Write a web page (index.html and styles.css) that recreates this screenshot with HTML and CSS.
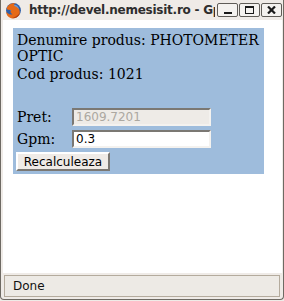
FILE: index.html
```html
<!DOCTYPE html>
<html lang="ro">
<head>
<meta charset="UTF-8">
<title>Gpm</title>
<link rel="stylesheet" href="styles.css">
</head>
<body>

<div class="window">
    <div class="titlebar">
        <svg class="logo" width="17" height="17" viewBox="0 0 16 16">
            <circle cx="8" cy="8" r="7" fill="#2f5fa8"/>
            <circle cx="9" cy="6.5" r="4" fill="#6c9ad6"/>
            <path d="M1.5 6.5 C2.5 2.5 6.5 0.5 10 1.5 C8.5 2 8 3 9 3.8 C11.5 4.8 14.5 7 13.8 10.5 C13 14 9.5 15.8 6 15.2 C2.8 14.6 1 12 1.2 9 C2.2 11 4.5 12.2 7 11.5 C5 10.5 4.5 8.5 6 7.5 C4.2 7.6 2.8 7.4 1.5 6.5 Z" fill="#e66a17"/>
            <path d="M13.8 10.5 C13 14 9.5 15.8 6 15.2 C9 14.5 11.5 13 13.8 10.5 Z" fill="#b8400c"/>
        </svg>
        <span class="title">http://devel.nemesisit.ro - Gpm</span>
        <div class="controls">
            <span class="ctl"><span class="ico-min"></span></span>
            <span class="ctl"><span class="ico-max"></span></span>
            <span class="ctl">
                <svg width="9" height="8" viewBox="0 0 9 8">
                    <path d="M1 0.5 L8 7.5 M8 0.5 L1 7.5" stroke="#1a1a1a" stroke-width="2.2"/>
                </svg>
            </span>
        </div>
    </div>

    <div class="content">
        <div class="panel">
            <p class="line">Denumire produs: PHOTOMETER OPTIC</p>
            <p class="line">Cod produs: 1021</p>
            <form class="calc">
                <div class="row">
                    <label>Pret:</label>
                    <input type="text" value="1609.7201" disabled>
                </div>
                <div class="row">
                    <label>Gpm:</label>
                    <input type="text" value="0.3">
                </div>
                <button type="button">Recalculeaza</button>
            </form>
        </div>
    </div>

    <div class="statusbar">Done</div>
</div>

</body>
</html>
```

FILE: styles.css
```css
body {
    margin: 0;
    padding: 0;
    background-color: #efebe7;
}

.window {
    width: 282px;
    height: 299px;
    border: 1px solid #6e6a63;
    border-top: none;
    border-radius: 0 0 4px 4px;
    background-color: #efebe7;
    display: flex;
    flex-direction: column;
}

.titlebar {
    height: 20px;
    display: flex;
    align-items: center;
    padding-left: 4px;
    overflow: hidden;
    white-space: nowrap;
    position: relative;
}

.logo {
    flex-shrink: 0;
    margin-right: 7px;
}

.title {
    font-family: "DejaVu Sans", sans-serif;
    font-weight: bold;
    font-size: 12px;
    letter-spacing: -0.25px;
    color: #2e2e2e;
}

.controls {
    position: absolute;
    right: 1px;
    top: 3px;
    display: flex;
    gap: 1px;
    background-color: #efebe7;
    padding-left: 2px;
}

.ctl {
    width: 19px;
    height: 12px;
    border: 1px solid #5f5c57;
    border-radius: 2px;
    background-color: #f4f2ef;
    display: flex;
    align-items: center;
    justify-content: center;
}

.ico-min {
    width: 8px;
    height: 2px;
    background-color: #1a1a1a;
    margin-top: 5px;
}

.ico-max {
    width: 7px;
    height: 5px;
    border: 1px solid #1a1a1a;
    border-top-width: 2px;
}

.content {
    flex: 1;
    background-color: #fff;
    margin: 0 1px 0 2px;
    padding: 8px 18px 0 10px;
}

.panel {
    background-color: #9ebcdc;
    padding: 4px 4px 3px 4px;
    font-family: "DejaVu Serif", serif;
    font-size: 14px;
    color: #000;
}

.line {
    margin: 0 0 2px 0;
    line-height: 16px;
}

.calc {
    margin-top: 26px;
}

.row {
    display: flex;
    align-items: center;
    height: 18px;
    margin-bottom: 4px;
}

.row label {
    width: 55px;
}

.row input {
    width: 131px;
    height: 14px;
    padding: 0 2px;
    border: 2px solid #7b7873;
    border-right-color: #f4f2ef;
    border-bottom-color: #f4f2ef;
    font-family: "DejaVu Sans", sans-serif;
    font-size: 12px;
    background-color: #fff;
    color: #000;
}

.row input:disabled {
    background-color: #eeebe7;
    color: #aca8a1;
}

button {
    display: block;
    margin-left: -1px;
    width: 94px;
    height: 19px;
    padding: 0;
    font-family: "DejaVu Sans", sans-serif;
    font-size: 12px;
    color: #000;
    background-color: #efebe7;
    border: 2px solid #fff;
    border-right-color: #7b7873;
    border-bottom-color: #7b7873;
}

.statusbar {
    height: 20px;
    margin: 2px 3px 2px 3px;
    border: 1px solid #b4ab9d;
    background-color: #edeae5;
    font-family: "DejaVu Sans", sans-serif;
    font-size: 12px;
    line-height: 20px;
    padding-left: 8px;
    color: #111;
}
```
